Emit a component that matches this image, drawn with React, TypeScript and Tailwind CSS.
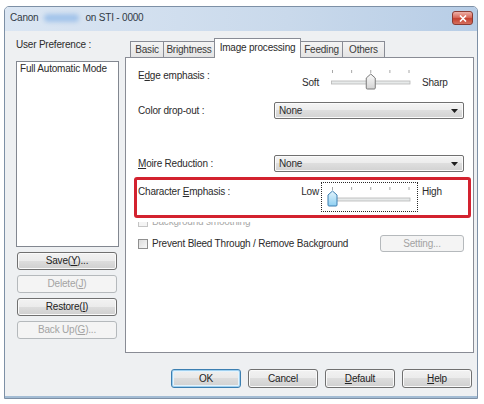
import React from 'react';

type BtnProps = {
  children: React.ReactNode;
  className?: string;
  disabled?: boolean;
  primary?: boolean;
};

function Btn({ children, className = '', disabled, primary }: BtnProps) {
  let look =
    'border-[#707070] text-[#222] bg-[linear-gradient(#f2f2f2,#ebebeb_50%,#dddddd_50%,#cfcfcf)] shadow-[inset_0_0_0_1px_#fafafa]';
  if (primary)
    look =
      'border-[#3c7fb1] text-[#222] bg-[linear-gradient(#f0f0f0,#e8e8e8_50%,#dcdcdc_50%,#d0d0d0)] shadow-[inset_0_0_0_1px_#9fd0f0,inset_0_0_0_2px_#e6f3fb]';
  if (disabled) look = 'border-[#b5b9bc] text-[#a3a3a3] bg-[#f4f4f4]';
  return (
    <div
      className={`flex items-center justify-center rounded-[3px] border ${look} ${className}`}
    >
      {children}
    </div>
  );
}

function U({ children }: { children: React.ReactNode }) {
  return <span className="underline underline-offset-1">{children}</span>;
}

function Check({ disabled }: { disabled?: boolean }) {
  return (
    <div
      className={`h-[10px] w-[10px] shrink-0 border ${
        disabled
          ? 'border-[#c4c4c4] bg-[#f4f4f4]'
          : 'border-[#8f8f8f] bg-[linear-gradient(135deg,#dcdcdc,#f8f8f8)]'
      }`}
    />
  );
}

function Dropdown({ value }: { value: string }) {
  return (
    <div className="flex h-[17px] w-[190px] items-center rounded-[2px] border border-[#707070] bg-[linear-gradient(#f4f4f4,#ececec_50%,#dedede_50%,#d2d2d2)] pl-[4px] pr-[5px] shadow-[inset_0_0_0_1px_#fbfbfb]">
      <span>{value}</span>
      <svg className="ml-auto" width="7" height="4" viewBox="0 0 7 4">
        <path d="M0 0 L7 0 L3.5 4 Z" fill="#1f1f1f" />
      </svg>
    </div>
  );
}

// trackbar drawn as svg: ticks on top, thumb pointing up
function Trackbar({ pos, hot }: { pos: number; hot?: boolean }) {
  const x0 = 10.5;
  const x1 = 87;
  const ticks = [0, 0.25, 0.5, 0.75, 1].map((t) => x0 + (x1 - x0) * t);
  const cx = x0 + (x1 - x0) * pos;
  const gid = hot ? 'thumbHot' : 'thumbCold';
  return (
    <svg width="95" height="28" viewBox="0 0 95 28">
      <defs>
        <linearGradient id="thumbCold" x1="0" y1="0" x2="0" y2="1">
          <stop offset="0" stopColor="#fbfbfb" />
          <stop offset="1" stopColor="#d3d3d3" />
        </linearGradient>
        <linearGradient id="thumbHot" x1="0" y1="0" x2="0" y2="1">
          <stop offset="0" stopColor="#e3f4fc" />
          <stop offset="1" stopColor="#8fd0f2" />
        </linearGradient>
      </defs>
      {ticks.map((t) => (
        <line key={t} x1={t} x2={t} y1="4" y2="7" stroke="#a8a8a8" strokeWidth="1" />
      ))}
      <rect x={x0 - 1} y="15" width={x1 - x0 + 2} height="3" fill="#e7eaea" stroke="#b6b6b6" strokeWidth="0.8" />
      <path
        d={`M${cx - 4.5} 12 L${cx} 8 L${cx + 4.5} 12 L${cx + 4.5} 22 Q${cx + 4.5} 23 ${cx + 3.5} 23 L${cx - 3.5} 23 Q${cx - 4.5} 23 ${cx - 4.5} 22 Z`}
        fill={`url(#${gid})`}
        stroke={hot ? '#3c7fb1' : '#7a7a7a'}
        strokeWidth="1"
      />
    </svg>
  );
}

function SliderGroup({
  low,
  high,
  pos,
  labelTop,
  focused,
}: {
  low: string;
  high: string;
  pos: number;
  labelTop: string;
  focused?: boolean;
}) {
  return (
    <div className="flex">
      <div className={`w-[40px] pr-[2px] text-right ${labelTop}`}>{low}</div>
      <div
        className={`h-[30px] w-[97px] border border-dotted ${
          focused ? 'border-[#2a2a2a]' : 'border-transparent'
        }`}
      >
        <Trackbar pos={pos} hot={focused} />
      </div>
      <div className={`pl-[4px] ${labelTop}`}>{high}</div>
    </div>
  );
}

const tabs = [
  { label: 'Basic', w: 'w-[34px]', edge: 'border-l border-r' },
  { label: 'Brightness', w: 'w-[50px]', edge: '' },
  { label: 'Image processing', w: 'w-[87px]', edge: 'border-l border-r', active: true },
  { label: 'Feeding', w: 'w-[42px]', edge: 'border-r' },
  { label: 'Others', w: 'w-[42px]', edge: 'border-r' },
];

export default function App() {
  return (
    <div className="h-[404px] w-[484px] bg-white pl-[4px] pt-[6px] font-['Liberation_Sans',Arial,sans-serif] text-[10px] leading-[12px] tracking-[-0.2px] text-[#2b2b2b]">
      <div className="flex h-[393px] w-[474px] flex-col overflow-hidden rounded-t-[5px] border border-[#7d90a6] bg-[#eef0f2]">
        {/* caption */}
        <div className="flex h-[24px] shrink-0 items-start bg-[linear-gradient(90deg,#dbe6f3,#c9d9eb_60%,#b7cde6)] pl-[5px] pt-[5px] text-[#303a45]">
          <span>Canon</span>
          <span className="mx-[6px] mt-[2px] inline-block h-[8px] w-[35px] rounded-full bg-[#a3c4ea] blur-[2px]" />
          <span>on STI - 0000</span>
          <div className="ml-auto mr-[4px] -mt-[1px] flex h-[14px] w-[21px] items-center justify-center rounded-[3px] border border-[#8a3b33] bg-[linear-gradient(#eeb1a8,#d86a5c_45%,#c4402f_55%,#d5705e)]">
            <svg width="8" height="7" viewBox="0 0 8 7">
              <path d="M1 0.5 L7 6.5 M7 0.5 L1 6.5" stroke="#fff" strokeWidth="1.6" />
            </svg>
          </div>
        </div>

        {/* client */}
        <div className="flex flex-1 border-b-2 border-[#a3bcd4] pl-[11px] pt-[7px]">
          {/* user preference column */}
          <div className="flex w-[103px] flex-col">
            <div className="mt-[1px] h-[12px]">User Preference :</div>
            <div className="mt-[10px] h-[186px] border border-[#828790] bg-white pl-[3px] pt-[1px]">
              Full Automatic Mode
            </div>
            <div className="ml-[1px] mt-[5px] flex flex-col gap-[5px]">
              <Btn className="h-[18px] w-[100px]">
                <span>
                  Save(<U>Y</U>)...
                </span>
              </Btn>
              <Btn className="h-[18px] w-[100px]" disabled>
                <span>
                  Delete(<U>J</U>)
                </span>
              </Btn>
              <Btn className="h-[18px] w-[100px]">
                <span>
                  Restore(<U>I</U>)
                </span>
              </Btn>
              <Btn className="h-[18px] w-[100px]" disabled>
                <span>
                  Back Up(<U>G</U>)...
                </span>
              </Btn>
            </div>
          </div>

          {/* tab area */}
          <div className="ml-[6px] flex w-[349px] flex-col">
            <div className="relative z-10 flex h-[19px] items-end pl-[5px]">
              {tabs.map((t) => (
                <div
                  key={t.label}
                  className={`flex items-center justify-center border-t border-[#898c95] ${t.w} ${t.edge} ${
                    t.active
                      ? '-mb-[1px] h-[20px] bg-white pb-[2px]'
                      : 'h-[16px] bg-[linear-gradient(#f4f4f4,#e4e4e4)] text-[#3a3a3a]'
                  }`}
                >
                  {t.label}
                </div>
              ))}
            </div>

            <div className="flex h-[296px] flex-col border border-[#898c95] bg-white pl-[12px]">
              <div className="mt-[7px] flex h-[30px]">
                <div className="w-[143px] pt-[5px]">
                  E<U>d</U>ge emphasis :
                </div>
                <SliderGroup low="Soft" high="Sharp" pos={0.5} labelTop="pt-[12px]" />
              </div>

              <div className="mt-[7px] flex h-[17px] items-center">
                <div className="w-[136px]">Color drop-out :</div>
                <Dropdown value="None" />
              </div>

              <div className="mt-[36px] flex h-[17px] items-center">
                <div className="w-[136px]">
                  <U>M</U>oire Reduction :
                </div>
                <Dropdown value="None" />
              </div>

              {/* highlighted setting, drawn over the row below it */}
              <div className="relative z-10 -ml-[4px] mt-[5px] flex w-[337px] rounded-[3px] border-[3px] border-[#d3222f] bg-white pb-[3px] pl-[1px] pt-[2px] shadow-[0_4px_0_0_#ffffff]">
                <div className="w-[143px] pt-[4px]">
                  Character <U>E</U>mphasis :
                </div>
                <SliderGroup low="Low" high="High" pos={0} labelTop="pt-[4px]" focused />
              </div>

              <div className="-mt-[6px] flex h-[17px] items-center gap-[4px] pt-[3px] text-[#a8a8a8]">
                <Check disabled />
                <span>Background smoothing</span>
              </div>

              <div className="mt-[6px] flex h-[17px] items-center gap-[4px]">
                <Check />
                <span>Prevent Bleed Through / Remove Background</span>
                <Btn className="ml-auto mr-[9px] h-[17px] w-[84px]" disabled>
                  Setting...
                </Btn>
              </div>
            </div>

            <div className="mt-[16px] flex justify-end gap-[7px] pr-[2px]">
              <Btn className="h-[19px] w-[70px]" primary>
                OK
              </Btn>
              <Btn className="h-[19px] w-[70px]">Cancel</Btn>
              <Btn className="h-[19px] w-[70px]">
                <span>
                  <U>D</U>efault
                </span>
              </Btn>
              <Btn className="h-[19px] w-[70px]">
                <span>
                  <U>H</U>elp
                </span>
              </Btn>
            </div>
          </div>
        </div>
      </div>
    </div>
  );
}
